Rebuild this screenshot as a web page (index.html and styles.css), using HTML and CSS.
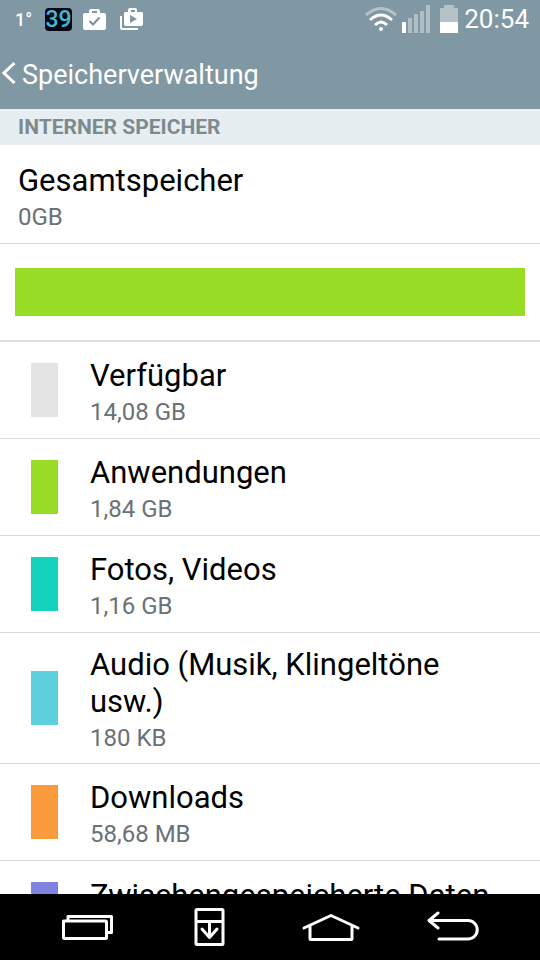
FILE: index.html
```html
<!DOCTYPE html>
<html lang="de">
<head>
<meta charset="utf-8">
<meta name="viewport" content="width=device-width, initial-scale=1">
<title>Speicherverwaltung</title>
<link rel="stylesheet" href="styles.css">
</head>
<body>
<div class="screen">
  <header class="top">
    <div class="status">
      <span class="temp">1°</span>
      <span class="badge">39</span>
      <svg class="bag" width="23" height="23" viewBox="0 0 23 23" aria-hidden="true">
        <path fill="#fff" fill-rule="evenodd" d="M6 5V3q0-2 2-2h7q2 0 2 2v2h4q2 0 2 2v13q0 2-2 2H2q-2 0-2-2V7q0-2 2-2zM9 5h5V3H9z"/>
        <path fill="none" stroke="#78919b" stroke-width="2" d="M6.500 13l3.500 3.500 6.500-7"/>
      </svg>
      <svg class="play" width="24" height="23" viewBox="0 0 24 23" aria-hidden="true">
        <path fill="#fff" fill-rule="evenodd" d="M9 4V2q0-2 2-2h5q2 0 2 2v2h4q2 0 2 1v11q0 2-2 2H7q-2 0-2-2V5q0-1 2-1zM12 4h4V2h-4zM11 7v8l7-4z"/>
        <path fill="none" stroke="#fff" stroke-width="2" d="M2 8v12q0 1 1 1h16"/>
      </svg>
      <svg class="wifi" width="32" height="26" viewBox="0 0 32 26" aria-hidden="true">
        <g fill="none" stroke="#fff" stroke-width="3">
          <path stroke="#b5c2c8" d="M1 9Q16-4 31 9"/>
          <path d="M5 14Q16 4 27 14"/>
          <path d="M10 19Q16 13 22 19"/>
        </g>
        <circle cx="16" cy="23" r="2" fill="#fff"/>
      </svg>
      <svg class="signal" width="28" height="28" viewBox="0 0 28 28" aria-hidden="true">
        <path fill="#fff" d="M0 17h4v11H0z"/>
        <path fill="#b0bec5" d="M6 13h4v15H6zM12 9h4v19h-4zM18 6h4v22h-4zM24 0h4v28h-4z"/>
      </svg>
      <svg class="battery" width="18" height="28" viewBox="0 0 18 28" aria-hidden="true">
        <path fill="#b5c2c8" d="M0 3h4V0h10v3h4v14H0z"/>
        <path fill="#fff" d="M0 17h18v11H0z"/>
      </svg>
      <time class="clock">20:54</time>
    </div>
    <a class="back" href="#">
      <svg width="14" height="24" viewBox="0 0 14 24" aria-hidden="true"><path fill="none" stroke="#fff" stroke-width="3" d="M12.500 2L2 12l10.500 10"/></svg>
      <h1>Speicherverwaltung</h1>
    </a>
  </header>
  <main class="content">
    <h2 class="section">INTERNER SPEICHER</h2>
    <div class="total">
      <div class="title">Gesamtspeicher</div>
      <div class="size">0GB</div>
    </div>
    <div class="usage"><div class="bar"></div></div>
    <ul class="list">
      <li class="row"><span class="swatch free"></span><div class="text"><div class="title">Verfügbar</div><div class="size">14,08 GB</div></div></li>
      <li class="row"><span class="swatch apps"></span><div class="text"><div class="title">Anwendungen</div><div class="size">1,84 GB</div></div></li>
      <li class="row"><span class="swatch photos"></span><div class="text"><div class="title">Fotos, Videos</div><div class="size">1,16 GB</div></div></li>
      <li class="row"><span class="swatch audio"></span><div class="text"><div class="title">Audio (Musik, Klingeltöne usw.)</div><div class="size">180 KB</div></div></li>
      <li class="row"><span class="swatch downloads"></span><div class="text"><div class="title">Downloads</div><div class="size">58,68 MB</div></div></li>
      <li class="row last"><span class="swatch cache"></span><div class="text"><div class="title">Zwischengespeicherte Daten</div></div></li>
    </ul>
  </main>
  <nav class="nav">
    <button type="button" aria-label="Letzte Apps"><svg width="52" height="40" viewBox="0 0 52 40"><path d="M7 13V9.500h43.500v16H46M2.500 14h42q1 0 1 1v15.500q0 1-1 1h-41q-1 0-1-1V15q0-1 1-1"/></svg></button>
    <button type="button" aria-label="Fenster"><svg width="56" height="40" viewBox="0 0 56 40"><path d="M18 2.500h24q1 0 1 1v33q0 1-1 1H17q-1 0-1-1v-33q0-1 1-1M16 14.500h27M29.500 15v15M22 22l7.500 8.500 7.500-8.500"/></svg></button>
    <button type="button" aria-label="Startseite"><svg width="58" height="40" viewBox="0 0 58 40"><path d="M2 21L29 8.500 56 21M8 19v12.500q0 1 1 1h40q1 0 1-1V19"/></svg></button>
    <button type="button" aria-label="Zurück"><svg width="52" height="40" viewBox="0 0 52 40"><path d="M11 6L2 13.500 11 21M3 13.500h38a9 9 0 0 1 0 18.500H12"/></svg></button>
  </nav>
</div>
</body>
</html>
```
FILE: styles.css
```css
* { box-sizing: border-box; }
body { margin: 0; font-family: Roboto, "Liberation Sans", sans-serif; background: #fff; color: #000; }
h1, h2, ul { margin: 0; padding: 0; }
.screen { height: 100vh; display: flex; flex-direction: column; overflow: hidden; }
.top { flex: none; background: #7f98a3; color: #fff; padding-bottom: 10px; }
.status { display: flex; align-items: center; height: 38px; padding: 0 11px 0 15px; }
.temp { font-size: 18px; font-weight: 500; width: 30px; }
.badge { width: 27px; height: 23px; border-radius: 4px; background: #02070f; color: #48b5df; font-size: 23px; font-weight: 500; line-height: 24px; text-align: center; }
.bag { margin-left: 11px; }
.play { margin-left: 13px; }
.wifi { margin-left: auto; }
.signal { margin-left: 5px; }
.battery { margin-left: 10px; }
.clock { margin-left: 6px; font-size: 26px; line-height: 30px; }
.back { display: flex; align-items: center; gap: 6px; height: 61px; padding: 12px 0 0 2px; color: #fff; text-decoration: none; }
.back svg { margin-bottom: 4px; }
h1 { font-size: 27px; font-weight: 400; line-height: 36px; }
.content { flex: 1; min-height: 0; overflow: hidden; }
.section { background: #e6eef1; color: #7d8a8e; font-size: 21px; font-weight: 700; line-height: 36px; padding-left: 18px; }
.total { padding: 17px 18px 11px; border-bottom: 1px solid #dcdcdc; }
.title { font-size: 31px; line-height: 37px; }
.size { font-size: 24px; line-height: 29px; margin-top: 4px; color: #697276; }
.usage { padding: 24px 15px; border-bottom: 2px solid #dfdfdf; }
.bar { height: 48px; background: #99dc26; }
.list { list-style: none; }
.row { display: flex; align-items: center; gap: 32px; min-height: 97px; padding: 10px 40px 10px 31px; border-bottom: 1px solid #dcdcdc; }
.text { padding-top: 3px; }
.last { align-items: flex-start; padding-top: 13px; }
.last .swatch { margin-top: 8px; }
.swatch { flex: none; width: 27px; height: 54px; }
.free { background: #e4e4e4; }
.apps { background: #99dc26; }
.photos { background: #14d2bb; }
.audio { background: #5dd0dd; }
.downloads { background: #f99b3c; }
.cache { background: #8084e0; }
.nav { flex: none; display: flex; justify-content: space-between; align-items: center; height: 66px; padding: 0 61px; background: #000; }
.nav button { padding: 0; border: 0; background: none; }
.nav svg { display: block; fill: none; stroke: #fff; stroke-width: 3; stroke-linecap: round; stroke-linejoin: round; }
```
